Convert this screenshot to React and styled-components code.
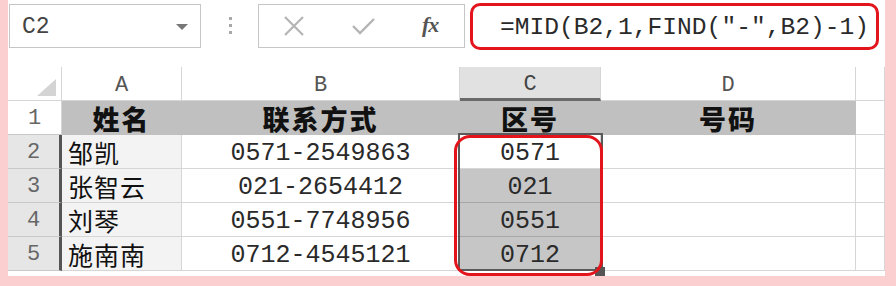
import React from "react";
import styled, { createGlobalStyle, css } from "styled-components";

const GlobalStyle = createGlobalStyle`
  html, body {
    margin: 0;
    padding: 0;
    background: #fbcfcf;
  }
`;

const MONO = `"Liberation Mono", "DejaVu Sans Mono", monospace`;
const CJK = `"Noto Sans CJK SC", "Noto Sans", sans-serif`;

const Frame = styled.div`
  width: 896px;
  height: 286px;
  padding: 0 11px 10px 8px;
  box-sizing: border-box;
`;

const Sheet = styled.div`
  background: #ffffff;
  height: 276px;
  display: flex;
  flex-direction: column;
`;

const Toolbar = styled.div`
  height: 67px;
  display: flex;
  align-items: flex-start;
  padding: 4px 0 0 1px;
  box-sizing: border-box;
`;

const NameBox = styled.div`
  width: 192px;
  height: 44px;
  border: 1px solid #c6c6c6;
  box-sizing: border-box;
  display: flex;
  align-items: center;
  justify-content: space-between;
  padding: 2px 12px 0 12px;
  font-family: ${MONO};
  font-size: 23px;
  color: #444;
`;

const Dots = styled.div`
  margin: 13px 0 0 28px;
  width: 4px;
  display: flex;
  flex-direction: column;
  gap: 4px;
  span {
    width: 3px;
    height: 3px;
    background: #a8a8a8;
  }
`;

const ButtonGroup = styled.div`
  margin-left: 25px;
  width: 207px;
  height: 44px;
  border: 1px solid #c6c6c6;
  box-sizing: border-box;
  display: flex;
  align-items: center;
  gap: 47px;
  padding-left: 24px;
`;

const Fx = styled.span`
  font-family: "Liberation Serif", serif;
  font-style: italic;
  font-weight: bold;
  font-size: 22px;
  color: #555;
  letter-spacing: -1px;
  margin-top: -2px;
`;

const FormulaBox = styled.div`
  margin: -1px 0 0 5px;
  width: 409px;
  height: 47px;
  border: 3px solid #e3141b;
  border-radius: 10px;
  box-sizing: border-box;
  display: flex;
  align-items: center;
  padding: 2px 0 0 27px;
  font-family: ${MONO};
  font-size: 24.6px;
  color: #2a2a2a;
  white-space: nowrap;
`;

const GridWrap = styled.div`
  position: relative;
`;

const Grid = styled.div`
  display: grid;
  grid-template-columns: 54px 120px 278px 141px 255px 29px;
  grid-auto-rows: 34px;
`;

const baseCell = css`
  box-sizing: border-box;
  border-right: 1px solid #d6d6d6;
  border-bottom: 1px solid #d6d6d6;
  display: flex;
  align-items: center;
  justify-content: center;
  white-space: nowrap;
  line-height: 1;
`;

const Corner = styled.div`
  ${baseCell};
  align-items: flex-end;
  justify-content: flex-end;
  padding: 0 5px 4px 0;
`;

const ColHeader = styled.div`
  ${baseCell};
  font-family: ${MONO};
  font-size: 22px;
  color: #555;
  padding-top: 4px;
  background: ${(p) => (p.$selected ? "#e1e1e1" : "#ffffff")};
  ${(p) =>
    p.$selected &&
    css`
      border-bottom: 3px solid #6a6a6a;
      color: #444;
    `}
`;

const RowHeader = styled.div`
  ${baseCell};
  font-family: ${MONO};
  font-size: 22px;
  color: #666;
  padding-top: 3px;
  background: ${(p) => (p.$selected ? "#e6e6e6" : "#ffffff")};
  border-bottom-color: #c9c9c9;
  ${(p) =>
    p.$selected &&
    css`
      border-right: 3px solid #555;
    `}
`;

const TitleCell = styled.div`
  ${baseCell};
  padding-top: 2px;
  background: #c0c0c0;
  border-right-color: #c0c0c0;
  border-bottom-color: #c0c0c0;
  font-family: ${CJK};
  font-weight: 900;
  font-size: 27px;
  letter-spacing: 2px;
  color: #111;
`;

const NameCell = styled.div`
  ${baseCell};
  justify-content: flex-start;
  padding: 2px 0 0 6px;
  background: #f3f3f3;
  font-family: ${CJK};
  font-size: 25px;
  letter-spacing: 1px;
  color: #111;
`;

const NumberCell = styled.div`
  ${baseCell};
  padding-top: 3px;
  font-family: ${MONO};
  font-size: 25px;
  color: #2a2a2a;
  background: ${(p) => (p.$selected ? "#c6c6c6" : "#ffffff")};
  ${(p) =>
    p.$selected &&
    css`
      border-bottom-color: #a6a6a6;
      border-right-color: #a6a6a6;
    `}
`;

const Blank = styled.div`
  ${baseCell};
`;

const SelectionFrame = styled.div`
  position: absolute;
  left: 450px;
  top: 66px;
  width: 145px;
  height: 138px;
  border: 2px solid #5a5a5a;
  box-sizing: border-box;
  pointer-events: none;
`;

const FillHandle = styled.div`
  position: absolute;
  left: 587px;
  top: 200px;
  width: 10px;
  height: 9px;
  background: #555;
`;

const RedFrame = styled.div`
  position: absolute;
  left: 446px;
  top: 68px;
  width: 149px;
  height: 141px;
  border: 3px solid #e3141b;
  border-radius: 16px;
  box-sizing: border-box;
  pointer-events: none;
`;

const rows = [
  { n: "2", name: "邹凯", phone: "0571-2549863", code: "0571", active: true },
  { n: "3", name: "张智云", phone: "021-2654412", code: "021" },
  { n: "4", name: "刘琴", phone: "0551-7748956", code: "0551" },
  { n: "5", name: "施南南", phone: "0712-4545121", code: "0712" },
];

const CrossIcon = () => (
  <svg width="22" height="20" viewBox="0 0 22 20">
    <path d="M2 1 L20 19 M20 1 L2 19" stroke="#b4b4b4" strokeWidth="2.2" fill="none" />
  </svg>
);

const CheckIcon = () => (
  <svg width="23" height="18" viewBox="0 0 23 18">
    <path d="M1 9 L8 16 L22 2" stroke="#b4b4b4" strokeWidth="2.4" fill="none" />
  </svg>
);

export default function App() {
  return (
    <>
      <GlobalStyle />
      <Frame>
        <Sheet>
          <Toolbar>
            <NameBox>
              <span>C2</span>
              <svg width="12" height="6" viewBox="0 0 12 6">
                <path d="M0 0 L12 0 L6 6 Z" fill="#777" />
              </svg>
            </NameBox>
            <Dots>
              <span />
              <span />
              <span />
            </Dots>
            <ButtonGroup>
              <CrossIcon />
              <CheckIcon />
              <Fx>fx</Fx>
            </ButtonGroup>
            <FormulaBox>=MID(B2,1,FIND("-",B2)-1)</FormulaBox>
          </Toolbar>
          <GridWrap>
            <Grid>
              <Corner>
                <svg width="19" height="17" viewBox="0 0 19 17">
                  <path d="M19 0 L19 17 L0 17 Z" fill="#d4d4d4" />
                </svg>
              </Corner>
              <ColHeader>A</ColHeader>
              <ColHeader>B</ColHeader>
              <ColHeader $selected>C</ColHeader>
              <ColHeader>D</ColHeader>
              <ColHeader />

              <RowHeader>1</RowHeader>
              <TitleCell>姓名</TitleCell>
              <TitleCell>联系方式</TitleCell>
              <TitleCell>区号</TitleCell>
              <TitleCell>号码</TitleCell>
              <Blank />

              {rows.map((r) => (
                <React.Fragment key={r.n}>
                  <RowHeader $selected>{r.n}</RowHeader>
                  <NameCell>{r.name}</NameCell>
                  <NumberCell>{r.phone}</NumberCell>
                  <NumberCell $selected={!r.active}>{r.code}</NumberCell>
                  <Blank />
                  <Blank />
                </React.Fragment>
              ))}
            </Grid>
            <SelectionFrame />
            <FillHandle />
            <RedFrame />
          </GridWrap>
        </Sheet>
      </Frame>
    </>
  );
}
